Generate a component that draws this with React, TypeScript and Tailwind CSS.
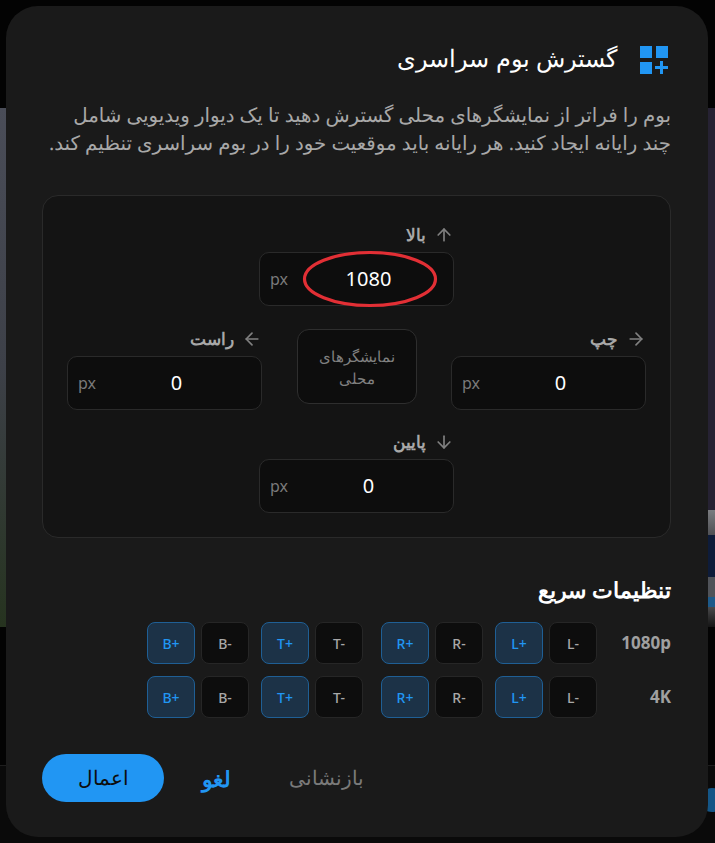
import React from 'react';
import { ArrowUp, ArrowDown, ArrowLeft, ArrowRight } from 'lucide-react';

const presets = ['B+', 'B-', 'T+', 'T-', 'R+', 'R-', 'L+', 'L-'];

function OffsetField({ label, icon, value, className }: { label: string; icon: React.ReactNode; value: string; className?: string }) {
  return (
    <div className={`w-[195px] ${className ?? ''}`}>
      <div className="flex h-[24px] items-center gap-[8px] text-[17px] font-bold text-[#a8a8a8]">
        <span className="text-[#808080]">{icon}</span>
        <span>{label}</span>
      </div>
      <div dir="ltr" className="mt-[5px] relative flex h-[54px] items-center rounded-[10px] border border-[#2a2a2a] bg-[#0d0d0d] pl-[10px]">
        <span className="text-[16px] text-[#7a7a7a]">px</span>
        <span className="absolute left-[24px] right-[0px] text-center text-[20px] text-white">{value}</span>
      </div>
    </div>
  );
}

function PresetRow({ name }: { name: string }) {
  return (
    <div className="flex h-[42px] items-center gap-[24px]">
      <span dir="ltr" className="w-[50px] whitespace-nowrap text-right text-[17px] font-bold text-[#a0a0a0]">{name}</span>
      <div dir="ltr" className="flex gap-[18px]">
        {[0, 4].map((start) => (
          <div key={start} className="flex gap-[12px]">
            {[start, start + 2].map((i) => (
              <div key={i} className="flex gap-[6px]">
                <button className="flex h-[42px] w-[48px] items-center justify-center rounded-[8px] border border-[#1f5f95] bg-[#1c3247] text-[14px] font-medium text-[#2196f3]">
                  {presets[i]}
                </button>
                <button className="flex h-[42px] w-[48px] items-center justify-center rounded-[8px] border border-[#262626] bg-[#0d0d0d] text-[14px] font-medium text-[#a8a8a8]">
                  {presets[i + 1]}
                </button>
              </div>
            ))}
          </div>
        ))}
      </div>
    </div>
  );
}

export default function App() {
  return (
    <div className="relative h-[843px] w-[715px] overflow-hidden bg-[#030303] font-['Noto_Sans',sans-serif]" dir="rtl">
      {/* dimmed wallpaper behind the dialog */}
      <div className="absolute left-0 top-[108px] h-[519px] w-[6px] bg-gradient-to-b from-[#4a4d58] via-[#3d4048] to-[#26331f]" />
      <div className="absolute right-0 top-[108px] flex h-[519px] w-[7px] flex-col">
        <div className="h-[402px] bg-[#262233]" />
        <div className="h-[25px] bg-gradient-to-b from-[#7a7c80] to-[#505155]" />
        <div className="h-[42px] bg-[#0e1c3a]" />
        <div className="h-[20px] bg-[#505359]" />
        <div className="h-[10px] bg-[#1d5a8a]" />
        <div className="h-[20px] bg-gradient-to-b from-[#4a4a4c] to-[#151515]" />
      </div>
      <div className="absolute left-0 top-[765px] h-[78px] w-[715px] border-t border-[#1e1e1e] bg-[#0a0a0a]" />
      <div className="absolute left-[700px] top-[788px] h-[24px] w-[24px] rounded-full bg-[#145687]" />

      <div className="absolute left-[6px] top-[6px] flex h-[831px] w-[702px] flex-col rounded-[32px] bg-[#1a1a1a] pl-[36px] pr-[37px]">
        <div className="mt-[40px] flex h-[28px] items-center gap-[26px]">
          <svg width="28" height="28" viewBox="0 0 28 28" fill="#2196f3" className="mr-[3px] -ml-[3px]">
            <rect x="0" y="0" width="12" height="12" />
            <rect x="16" y="0" width="12" height="12" />
            <rect x="0" y="16" width="12" height="12" />
            <path d="M20 15h3v5h5v3h-5v5h-3v-5h-5v-3h5z" />
          </svg>
          <h1 className="-mt-[4px] text-[24.1px] font-medium leading-[28px] text-white">گسترش بوم سراسری</h1>
        </div>

        <p className="mt-[27px] whitespace-nowrap text-[19.8px] leading-[28px] text-[#a8a8a8] [text-rendering:geometricPrecision]">
          بوم را فراتر از نمایشگرهای محلی گسترش دهید تا یک دیوار ویدیویی شامل
          <br />
          چند رایانه ایجاد کنید. هر رایانه باید موقعیت خود را در بوم سراسری تنظیم کند.
        </p>

        <div className="mt-[38px] flex h-[343px] flex-col items-center rounded-[16px] border border-[#2a2a2a] bg-[#141414] px-[24px] pt-[27px]">
          <div className="relative">
            <OffsetField label="بالا" icon={<ArrowUp size={20} />} value="1080" />
            <svg className="absolute left-[43px] top-[27px]" width="136" height="58" viewBox="0 0 136 58" fill="none">
              <ellipse cx="68" cy="29" rx="65.5" ry="26.5" stroke="#e22f35" strokeWidth="3.2" />
            </svg>
          </div>

          <div className="mt-[21px] flex w-full items-start justify-between">
            <OffsetField label="چپ" icon={<ArrowRight size={20} />} value="0" />
            <div className="mt-[2px] flex h-[75px] w-[120px] items-center justify-center rounded-[12px] border border-[#2e2e2e] bg-[#0d0d0d] px-[12px] text-center text-[15px] leading-[22px] text-[#808080]">
              نمایشگرهای محلی
            </div>
            <OffsetField label="راست" icon={<ArrowLeft size={20} />} value="0" />
          </div>

          <OffsetField label="پایین" icon={<ArrowDown size={20} />} value="0" className="mt-[20px]" />
        </div>

        <h2 className="mt-[38px] text-[22px] font-bold leading-[26px] text-white">تنظیمات سریع</h2>

        <div className="mt-[20px] flex flex-col gap-[12px]">
          <PresetRow name="1080p" />
          <PresetRow name="4K" />
        </div>

        <div dir="ltr" className="mt-[36px] flex items-center">
          <button className="h-[48px] w-[122px] rounded-[24px] bg-[#2196f3] text-[20px] font-medium text-[#0d0d0d]">اعمال</button>
          <button className="ml-[38px] text-[22px] font-bold text-[#2196f3]">لغو</button>
          <button className="ml-[58px] text-[20px] font-medium text-[#7a7a7a]">بازنشانی</button>
        </div>
      </div>
    </div>
  );
}
